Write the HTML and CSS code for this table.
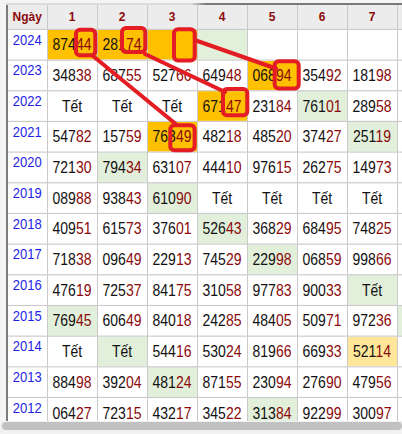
FILE: index.html
```html
<!DOCTYPE html>
<html lang="vi">
<head>
<meta charset="utf-8">
<title>Bảng đặc biệt theo năm</title>
<link rel="stylesheet" href="styles.css">
</head>
<body>
<div class="page">
  <div class="topline"></div>
  <div class="panel">
    <table class="grid">
      <colgroup>
        <col class="c-year"><col class="c-day"><col class="c-day"><col class="c-day"><col class="c-day"><col class="c-day"><col class="c-day"><col class="c-day"><col class="c-day">
      </colgroup>
      <thead>
        <tr><th>Ngày</th><th>1</th><th>2</th><th>3</th><th>4</th><th>5</th><th>6</th><th>7</th><th></th></tr>
      </thead>
      <tbody>
        <tr><td class="yr">2024</td><td class="o">874<span class="t">44</span></td><td class="o">281<span class="t">74</span></td><td class="o"></td><td class="g"></td><td></td><td></td><td></td><td></td></tr>
        <tr><td class="yr">2023</td><td>348<span class="t">38</span></td><td>687<span class="t">55</span></td><td>527<span class="t">66</span></td><td>649<span class="t">48</span></td><td class="o">068<span class="t">94</span></td><td>354<span class="t">92</span></td><td>181<span class="t">98</span></td><td></td></tr>
        <tr><td class="yr">2022</td><td>Tết</td><td>Tết</td><td>Tết</td><td class="o">671<span class="t">47</span></td><td>231<span class="t">84</span></td><td class="g">761<span class="t">01</span></td><td>289<span class="t">58</span></td><td></td></tr>
        <tr><td class="yr">2021</td><td>547<span class="t">82</span></td><td>157<span class="t">59</span></td><td class="o">763<span class="t">49</span></td><td>482<span class="t">18</span></td><td>485<span class="t">20</span></td><td>374<span class="t">27</span></td><td class="g">251<span class="t">19</span></td><td></td></tr>
        <tr><td class="yr">2020</td><td>721<span class="t">30</span></td><td class="g">794<span class="t">34</span></td><td>631<span class="t">07</span></td><td>444<span class="t">10</span></td><td>976<span class="t">15</span></td><td>262<span class="t">75</span></td><td>149<span class="t">73</span></td><td></td></tr>
        <tr><td class="yr">2019</td><td>089<span class="t">88</span></td><td>938<span class="t">43</span></td><td class="g">610<span class="t">90</span></td><td>Tết</td><td>Tết</td><td>Tết</td><td>Tết</td><td></td></tr>
        <tr><td class="yr">2018</td><td>409<span class="t">51</span></td><td>615<span class="t">73</span></td><td>376<span class="t">01</span></td><td class="g">526<span class="t">43</span></td><td>368<span class="t">29</span></td><td>684<span class="t">95</span></td><td>748<span class="t">25</span></td><td></td></tr>
        <tr><td class="yr">2017</td><td>718<span class="t">38</span></td><td>096<span class="t">49</span></td><td>229<span class="t">13</span></td><td>745<span class="t">29</span></td><td class="g">229<span class="t">98</span></td><td>068<span class="t">59</span></td><td>998<span class="t">66</span></td><td></td></tr>
        <tr><td class="yr">2016</td><td>476<span class="t">19</span></td><td>725<span class="t">37</span></td><td>841<span class="t">75</span></td><td>310<span class="t">58</span></td><td>977<span class="t">83</span></td><td>900<span class="t">33</span></td><td class="g">Tết</td><td></td></tr>
        <tr><td class="yr">2015</td><td class="g">769<span class="t">45</span></td><td>606<span class="t">49</span></td><td>840<span class="t">18</span></td><td>242<span class="t">85</span></td><td>484<span class="t">05</span></td><td>509<span class="t">71</span></td><td>972<span class="t">36</span></td><td class="g"></td></tr>
        <tr><td class="yr">2014</td><td>Tết</td><td class="g">Tết</td><td>544<span class="t">16</span></td><td>530<span class="t">24</span></td><td>819<span class="t">66</span></td><td>669<span class="t">33</span></td><td class="y">521<span class="t">14</span></td><td></td></tr>
        <tr><td class="yr">2013</td><td>884<span class="t">98</span></td><td>392<span class="t">04</span></td><td class="g">481<span class="t">24</span></td><td>871<span class="t">55</span></td><td>230<span class="t">94</span></td><td>276<span class="t">90</span></td><td>479<span class="t">56</span></td><td></td></tr>
        <tr><td class="yr">2012</td><td>064<span class="t">27</span></td><td>723<span class="t">15</span></td><td>432<span class="t">17</span></td><td>345<span class="t">22</span></td><td class="g">313<span class="t">84</span></td><td>922<span class="t">99</span></td><td>300<span class="t">97</span></td><td></td></tr>
      </tbody>
    </table>
  </div>
</div>
<div class="hscroll"><div class="thumb"></div></div>

<svg class="marks" width="402" height="434" viewBox="0 0 402 434" xmlns="http://www.w3.org/2000/svg">
  <g fill="none" stroke="#e41c24" stroke-width="4" stroke-linecap="round" stroke-linejoin="round">
    <line x1="93" y1="56" x2="177" y2="125"/>
    <line x1="145" y1="54" x2="225" y2="92"/>
    <line x1="196" y1="40.5" x2="276" y2="68.5"/>
    <rect x="76" y="29.7" width="19.3" height="25.6" rx="4"/>
    <rect x="122" y="28" width="23.3" height="24" rx="4"/>
    <rect x="174" y="29.3" width="20.7" height="31.3" rx="4"/>
    <rect x="274.7" y="61.3" width="24" height="27.3" rx="4"/>
    <rect x="223" y="89" width="24.3" height="26.3" rx="4"/>
    <rect x="170.3" y="125.3" width="24.3" height="25" rx="4"/>
  </g>
</svg>
</body>
</html>
```

FILE: styles.css
```css
html, body {
  margin: 0;
  padding: 0;
}

body {
  width: 402px;
  height: 434px;
  overflow: hidden;
  background: #ffffff;
  font-family: "Liberation Sans", Arial, sans-serif;
  position: relative;
}

.page {
  height: 421px;
  box-sizing: border-box;
  padding: 3px 0 0 6px;
  background: #f4f4f4;
}

.topline {
  height: 2px;
  background: linear-gradient(to right, #dcdcdc 0, #dcdcdc 185px, #7a7a7a 200px, #7a7a7a 100%);
}

.panel {
  height: 416px;
  overflow: hidden;
  border-left: 2px solid #7b7b7b;
  background: #ffffff;
}

.grid {
  border-collapse: collapse;
  table-layout: fixed;
  width: 439px;
  transform: scaleY(1.136);
  transform-origin: 0 0;
}

.c-year { width: 39px; }
.c-day { width: 50px; }

.grid th,
.grid td {
  border: 1px solid #cacaca;
  padding: 0;
  text-align: center;
  vertical-align: middle;
  white-space: nowrap;
  overflow: hidden;
}

.grid td:first-child,
.grid th:first-child { border-left: none; }
.grid thead th { border-top: none; }

.grid thead tr { height: 21px; }
.grid tbody tr { height: 27px; }

.grid th {
  background: #ececec;
  color: #8b0a0a;
  font-size: 12px;
  font-weight: bold;
}

.grid td {
  font-size: 14px;
  color: #111111;
}

.grid td.yr {
  vertical-align: top;
  padding-top: 1px;
  font-size: 13px;
  color: #1f1fe8;
}

.t { color: #8b0a0a; }

.o { background: #ffc000; }
.g { background: #e2efda; }
.y { background: #ffe699; }

.hscroll {
  height: 13px;
  box-sizing: border-box;
  padding: 1px 0 0 2px;
  background: #f1f1f1;
}

.thumb {
  height: 8px;
  border-radius: 4px;
  background: #c1c1c1;
}

.marks {
  position: absolute;
  left: 0;
  top: 0;
  pointer-events: none;
}
```
